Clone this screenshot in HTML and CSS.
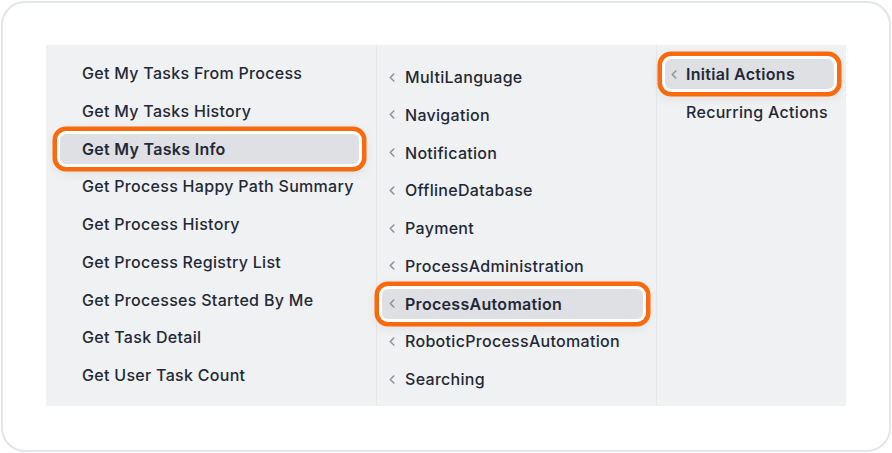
FILE: index.html
```html
<!DOCTYPE html>
<html lang="en">
<head>
<meta charset="utf-8">
<title>Menu</title>
<link rel="stylesheet" href="styles.css">
</head>
<body>
<div class="card">
  <div class="panel">
    <ul class="col col-1">
      <li class="item">Get My Tasks From Process</li>
      <li class="item">Get My Tasks History</li>
      <li class="item active">Get My Tasks Info</li>
      <li class="item">Get Process Happy Path Summary</li>
      <li class="item">Get Process History</li>
      <li class="item">Get Process Registry List</li>
      <li class="item">Get Processes Started By Me</li>
      <li class="item">Get Task Detail</li>
      <li class="item">Get User Task Count</li>
    </ul>
    <ul class="col col-2">
      <li class="item"><svg class="chev" viewBox="0 0 6 9"><polyline points="4.8,1 1.3,4.5 4.8,8"/></svg>MultiLanguage</li>
      <li class="item"><svg class="chev" viewBox="0 0 6 9"><polyline points="4.8,1 1.3,4.5 4.8,8"/></svg>Navigation</li>
      <li class="item"><svg class="chev" viewBox="0 0 6 9"><polyline points="4.8,1 1.3,4.5 4.8,8"/></svg>Notification</li>
      <li class="item"><svg class="chev" viewBox="0 0 6 9"><polyline points="4.8,1 1.3,4.5 4.8,8"/></svg>OfflineDatabase</li>
      <li class="item"><svg class="chev" viewBox="0 0 6 9"><polyline points="4.8,1 1.3,4.5 4.8,8"/></svg>Payment</li>
      <li class="item"><svg class="chev" viewBox="0 0 6 9"><polyline points="4.8,1 1.3,4.5 4.8,8"/></svg>ProcessAdministration</li>
      <li class="item active"><svg class="chev" viewBox="0 0 6 9"><polyline points="4.8,1 1.3,4.5 4.8,8"/></svg>ProcessAutomation</li>
      <li class="item"><svg class="chev" viewBox="0 0 6 9"><polyline points="4.8,1 1.3,4.5 4.8,8"/></svg>RoboticProcessAutomation</li>
      <li class="item"><svg class="chev" viewBox="0 0 6 9"><polyline points="4.8,1 1.3,4.5 4.8,8"/></svg>Searching</li>
    </ul>
    <ul class="col col-3">
      <li class="item active"><svg class="chev" viewBox="0 0 6 9"><polyline points="4.8,1 1.3,4.5 4.8,8"/></svg>Initial Actions</li>
      <li class="item plain">Recurring Actions</li>
    </ul>
  </div>
</div>
</body>
</html>
```

FILE: styles.css
```css
* { box-sizing: border-box; }

html, body {
  margin: 0;
  padding: 0;
  background: #ffffff;
}

body {
  font-family: Inter, "Noto Sans", "Liberation Sans", sans-serif;
  color: #1f2937;
}

.card {
  margin: 1px 0 0 1px;
  width: 890px;
  height: 451px;
  border: 2px solid #e2e5e9;
  border-radius: 24px;
  padding: 42px 0 0 43px;
}

.panel {
  display: flex;
  width: 800px;
  height: 361px;
  background: #f0f1f3;
}

.col {
  list-style: none;
  margin: 0;
  display: flex;
  flex-direction: column;
  gap: 7.75px;
}

.col-1 {
  width: 331px;
  padding: 13px 17px 0 14px;
  border-right: 1px solid #e4e6e9;
}

.col-2 {
  width: 280px;
  padding: 17px 13px 0 5px;
  border-right: 1px solid #e4e6e9;
}

.col-3 {
  flex: 1;
  padding: 14px 12px 0 8px;
  gap: 8px;
}

.item {
  flex-shrink: 0;
  height: 30px;
  display: flex;
  align-items: center;
  font-size: 16px;
  font-weight: 500;
  letter-spacing: 0.3px;
  border-radius: 6px;
  white-space: nowrap;
}

.col-1 .item { padding-left: 22px; }
.col-2 .item { padding-left: 7px; }
.col-3 .item { padding-left: 6px; }
.col-3 .item.plain { padding-left: 21px; }

.chev {
  width: 6px;
  height: 9px;
  margin-right: 10px;
  flex-shrink: 0;
  fill: none;
  stroke: #8f949c;
  stroke-width: 1.6;
  stroke-linecap: round;
  stroke-linejoin: round;
}

.col-3 .chev { margin-right: 9px; }

.item.active {
  background: #dfe0e4;
  font-weight: 600;
  box-shadow: 0 0 0 3px #ffffff, 0 0 0 7.5px #fa6a0c, 0 3px 12px 6px rgba(0, 0, 0, 0.08);
}
```
